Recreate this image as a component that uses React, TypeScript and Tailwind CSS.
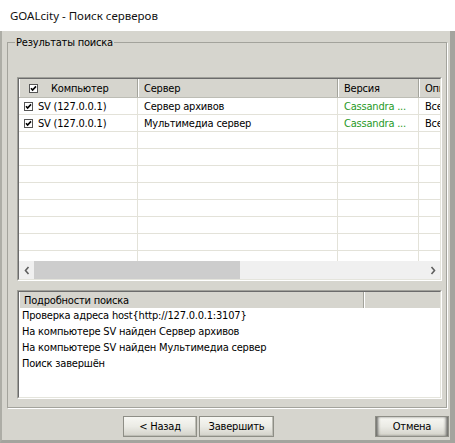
import React from 'react';

// Win-classic style "server search" wizard page
const ui = "font-['DejaVu_Sans_Condensed','DejaVu_Sans',sans-serif] text-[11px] leading-[13px] tracking-[-0.2px]";

const CheckMark: React.FC = () => (
    <svg width="9" height="9" viewBox="0 0 9 9" className="shrink-0">
        <rect x="0.5" y="0.5" width="8" height="8" fill="#fff" stroke="#555" />
        <path d="M2 4.2 L3.6 6 L7 2.4" fill="none" stroke="#000" strokeWidth="1.6" />
    </svg>
);

const Chevron: React.FC<{ dir: 'left' | 'right' }> = ({ dir }) => (
    <svg width="6" height="9" viewBox="0 0 6 9">
        <path
            d={dir === 'left' ? 'M4.5 1 L1.5 4.5 L4.5 8' : 'M1.5 1 L4.5 4.5 L1.5 8'}
            fill="none"
            stroke="#5f5f5f"
            strokeWidth="1.6"
        />
    </svg>
);

interface Row {
    host: string;
    server: string;
    version: string;
    desc: string;
}

const rows: Row[] = [
    { host: 'SV (127.0.0.1)', server: 'Сервер архивов', version: 'Cassandra ...', desc: 'Все' },
    { host: 'SV (127.0.0.1)', server: 'Мультимедиа сервер', version: 'Cassandra ...', desc: 'Все' },
];

const log = [
    'Проверка адреса host{http://127.0.0.1:3107}',
    'На компьютере SV найден Сервер архивов',
    'На компьютере SV найден Мультимедиа сервер',
    'Поиск завершён',
];

const HeadCell: React.FC<{ w: string; children?: React.ReactNode; className?: string }> = ({ w, children, className = '' }) => (
    <div className={`${w} shrink-0 h-full flex items-center border-r border-[#a3a39b] shadow-[inset_1px_0_0_#ffffff] overflow-hidden whitespace-nowrap ${className}`}>
        {children}
    </div>
);

const Button: React.FC<{ label: string; w: string; focus?: boolean; className?: string }> = ({ label, w, focus, className = '' }) => (
    <button
        className={`${w} h-[21px] flex items-center justify-center border border-[#8e8e86] bg-gradient-to-b from-[#f7f7f3] via-[#ebebe5] to-[#d2d1c9] text-black ${
            focus ? 'shadow-[inset_3px_0_3px_-1px_#6a6a66,inset_-3px_0_3px_-1px_#6a6a66]' : 'shadow-[inset_-1px_-1px_0_#bdbdb5]'
        } ${className}`}
    >
        {label}
    </button>
);

export default function App() {
    const emptyRows = Array.from({ length: 9 });

    return (
        <div className={`w-[455px] h-[443px] flex flex-col bg-[#d6d5ce] text-black ${ui}`}>
            {/* caption */}
            <div className="h-[31px] shrink-0 bg-white flex items-center pl-[10px] font-['Noto_Sans',sans-serif] text-[11.5px] tracking-normal text-[#111]">
                GOALcity - Поиск серверов
            </div>

            <div className="flex-1 flex flex-col border-l-2 border-b-[3px] border-r-[5px] border-l-[#adada6] border-b-[#a4a49e] border-r-[#a4a49e] min-h-0">
                <fieldset className="mt-[5px] ml-[5px] mr-[3px] border border-[#a3a39c] shadow-[1px_1px_0_#ffffff] pl-[9px] pr-[4px] pt-[28px] pb-[8px] min-w-0">
                    <legend className="-ml-[2px] px-[1px] leading-[13px]">Результаты поиска</legend>

                    {/* server list */}
                    <div className="h-[204px] flex flex-col border-t border-l border-t-[#a0a09a] border-l-[#a0a09a] border-r border-b border-r-white border-b-white">
                        <div className="flex-1 flex flex-col min-h-0 border-t border-l border-t-[#6b6b6b] border-l-[#6b6b6b] border-r border-b border-r-[#e4e4dc] border-b-[#e4e4dc] bg-white overflow-hidden">
                            <div className="h-[19px] shrink-0 flex bg-[#d6d5ce] border-b border-[#bdbdb5]">
                                <HeadCell w="w-[119px]" className="pl-[10px] gap-[13px]">
                                    <CheckMark />
                                    <span>Компьютер</span>
                                </HeadCell>
                                <HeadCell w="w-[200px]" className="pl-[6px]">Сервер</HeadCell>
                                <HeadCell w="w-[81px]" className="pl-[6px]">Версия</HeadCell>
                                <HeadCell w="w-[40px]" className="pl-[6px] border-r-0">Описание</HeadCell>
                            </div>

                            <div className="flex-1 min-h-0 overflow-hidden">
                                {rows.map((r, i) => (
                                    <div key={i} className="h-[17px] flex border-b border-[#e3e2d9]">
                                        <div className="w-[119px] shrink-0 flex items-center gap-[5px] pl-[5px] border-r border-[#e3e2d9]">
                                            <CheckMark />
                                            <span>{r.host}</span>
                                        </div>
                                        <div className="w-[200px] shrink-0 flex items-center pl-[6px] border-r border-[#e3e2d9]">{r.server}</div>
                                        <div className="w-[81px] shrink-0 flex items-center pl-[6px] border-r border-[#e3e2d9] text-[#1f9a1f] whitespace-nowrap">{r.version}</div>
                                        <div className="flex-1 flex items-center pl-[6px] overflow-hidden whitespace-nowrap">{r.desc}</div>
                                    </div>
                                ))}
                                {emptyRows.map((_, i) => (
                                    <div key={`e-${i}`} className="h-[17px] flex border-b border-[#e3e2d9]">
                                        <div className="w-[119px] shrink-0 border-r border-[#e3e2d9]" />
                                        <div className="w-[200px] shrink-0 border-r border-[#e3e2d9]" />
                                        <div className="w-[81px] shrink-0 border-r border-[#e3e2d9]" />
                                        <div className="flex-1" />
                                    </div>
                                ))}
                            </div>

                            {/* horizontal scrollbar */}
                            <div className="h-[18px] shrink-0 flex items-center bg-[#f0f0f0]">
                                <div className="w-[15px] h-full flex items-center justify-center">
                                    <Chevron dir="left" />
                                </div>
                                <div className="w-[206px] h-full bg-[#cdcdcd]" />
                                <div className="flex-1" />
                                <div className="w-[15px] h-full flex items-center justify-center">
                                    <Chevron dir="right" />
                                </div>
                            </div>
                        </div>
                    </div>

                    {/* search details */}
                    <div className="mt-[9px] h-[109px] flex flex-col border-t border-l border-t-[#a0a09a] border-l-[#a0a09a] border-r border-b border-r-white border-b-white">
                        <div className="flex-1 flex flex-col min-h-0 border-t border-l border-t-[#6b6b6b] border-l-[#6b6b6b] border-r border-b border-r-[#e4e4dc] border-b-[#e4e4dc] bg-white overflow-hidden">
                            <div className="h-[16px] shrink-0 flex bg-[#d6d5ce]">
                                <HeadCell w="w-[345px]" className="pl-[5px]">Подробности поиска</HeadCell>
                                <div className="flex-1 shadow-[inset_1px_0_0_#ffffff]" />
                            </div>
                            <div className="flex flex-col pl-[3px] -mt-[1px]">
                                {log.map((l, i) => (
                                    <div key={i} className="h-[16px] flex items-center whitespace-nowrap">{l}</div>
                                ))}
                            </div>
                        </div>
                    </div>
                </fieldset>

                {/* wizard buttons */}
                <div className="mt-[8px] flex justify-end pr-[1px]">
                    <Button label="< Назад" w="w-[74px]" />
                    <Button label="Завершить" w="w-[75px]" className="ml-[2px] mr-[101px]" />
                    <Button label="Отмена" w="w-[74px]" focus />
                </div>
            </div>
        </div>
    );
}
